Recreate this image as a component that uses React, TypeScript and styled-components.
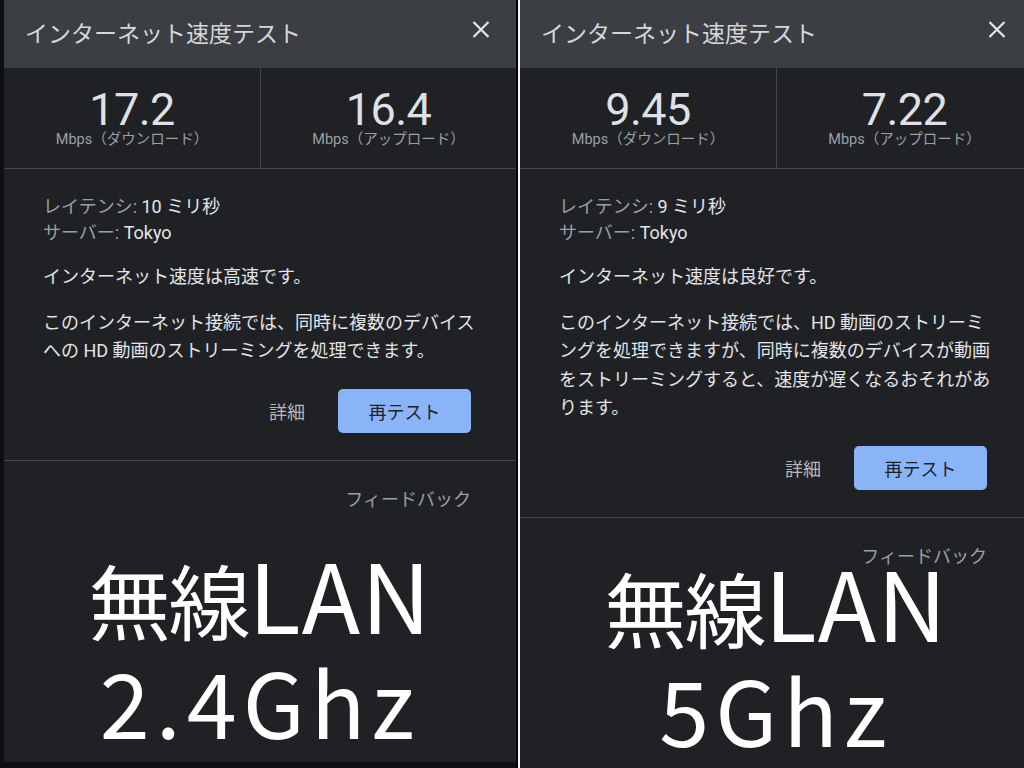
import styled, { createGlobalStyle } from 'styled-components';

type Result = {
  down: string;
  up: string;
  latency: string;
  verdict: string;
  detail: string;
  band: string;
};

const results: Result[] = [
  {
    down: '17.2',
    up: '16.4',
    latency: '10 ミリ秒',
    verdict: 'インターネット速度は高速です。',
    detail: 'このインターネット接続では、同時に複数のデバイスへの HD 動画のストリーミングを処理できます。',
    band: '2.4Ghz',
  },
  {
    down: '9.45',
    up: '7.22',
    latency: '9 ミリ秒',
    verdict: 'インターネット速度は良好です。',
    detail:
      'このインターネット接続では、HD 動画のストリーミングを処理できますが、同時に複数のデバイスが動画をストリーミングすると、速度が遅くなるおそれがあります。',
    band: '5Ghz',
  },
];

const CloseIcon = () => (
  <svg width="18" height="17" viewBox="0 0 18 17">
    <path d="M1.5 1L16.5 16M16.5 1L1.5 16" stroke="#e3e5e8" strokeWidth="2.2" />
  </svg>
);

const SpeedDialog = ({ data, captionGap }: { data: Result; captionGap: number }) => (
  <Dialog>
    <Header>
      <Title>インターネット速度テスト</Title>
      <CloseBtn type="button">
        <CloseIcon />
      </CloseBtn>
    </Header>
    <Stats>
      <StatCell>
        <StatValue>{data.down}</StatValue>
        <StatLabel>Mbps（ダウンロード）</StatLabel>
      </StatCell>
      <StatCell>
        <StatValue>{data.up}</StatValue>
        <StatLabel>Mbps（アップロード）</StatLabel>
      </StatCell>
    </Stats>
    <Body>
      <InfoLine>
        <Key>レイテンシ:</Key> {data.latency}
      </InfoLine>
      <InfoLine>
        <Key>サーバー:</Key> Tokyo
      </InfoLine>
      <Verdict>{data.verdict}</Verdict>
      <Detail>{data.detail}</Detail>
      <Actions>
        <TextBtn type="button">詳細</TextBtn>
        <RetestBtn type="button">再テスト</RetestBtn>
      </Actions>
    </Body>
    <Footer>
      <FeedbackRow>
        <Feedback>フィードバック</Feedback>
      </FeedbackRow>
      <Caption $gap={captionGap}>
        <CaptionLine>
          <Kanji>無線</Kanji>LAN
        </CaptionLine>
        <CaptionLine $wide>{data.band}</CaptionLine>
      </Caption>
    </Footer>
  </Dialog>
);

const App = () => (
  <>
    <GlobalStyle />
    <Page>
      <Shot $inset>
        <SpeedDialog data={results[0]} captionGap={29} />
      </Shot>
      <Seam />
      <Shot>
        <SpeedDialog data={results[1]} captionGap={35} />
      </Shot>
    </Page>
  </>
);

export default App;

const GlobalStyle = createGlobalStyle`
  body {
    margin: 0;
    background: #000;
    font-family: Roboto, "Noto Sans CJK JP", sans-serif;
  }
`;

const Page = styled.div`
  display: flex;
  width: 1024px;
  height: 768px;
  overflow: hidden;
`;

const Shot = styled.div<{ $inset?: boolean }>`
  display: flex;
  flex: ${({ $inset }) => ($inset ? '0 0 auto' : '1 1 0')};
  min-width: 0;
  padding: ${({ $inset }) => ($inset ? '0 0 6px 4px' : '0')};
  background: #0e0f11;
  overflow: hidden;
`;

const Seam = styled.div`
  flex: 0 0 2px;
  background: #000;
  border-right: 2px solid #f4f4f4;
`;

const Dialog = styled.div`
  display: flex;
  flex-direction: column;
  flex: 0 0 512px;
  width: 512px;
  background: #202124;
  color: #e8eaed;

  & > * {
    flex-shrink: 0;
  }
`;

const Header = styled.div`
  display: flex;
  justify-content: space-between;
  align-items: flex-start;
  height: 68px;
  padding: 0 26px 0 21px;
  background: #3b3e42;
`;

const Title = styled.h1`
  margin: 22px 0 0;
  font-size: 23px;
  font-weight: 400;
  line-height: 26px;
  color: #d5d7da;
`;

const CloseBtn = styled.button`
  display: flex;
  margin-top: 21px;
  padding: 0;
  border: none;
  background: transparent;
  cursor: pointer;
`;

const Stats = styled.div`
  display: grid;
  grid-template-columns: 256px 1fr;
  height: 100px;
  border-bottom: 1px solid #44474b;
`;

const StatCell = styled.div`
  display: flex;
  flex-direction: column;
  align-items: center;
  padding-top: 19px;

  & + & {
    border-left: 1px solid #44474b;
  }
`;

const StatValue = styled.div`
  font-size: 45px;
  line-height: 46px;
  letter-spacing: -0.5px;
  color: #dfe1e4;
`;

const StatLabel = styled.div`
  margin-top: -2px;
  font-size: 14.5px;
  line-height: 18px;
  color: #9aa0a6;
`;

const Body = styled.div`
  padding: 25px 45px 27px 39px;
  border-bottom: 1px solid #44474b;
  font-size: 18px;
`;

const InfoLine = styled.div`
  line-height: 26px;
  color: #e3e5e8;
`;

const Key = styled.span`
  color: #9aa0a6;
`;

const Verdict = styled.p`
  margin: 17px 0 0;
  line-height: 28px;
  color: #e3e5e8;
`;

const Detail = styled.p`
  width: 436px;
  margin: 18px 0 0;
  line-height: 28.4px;
  color: #e3e5e8;
`;

const Actions = styled.div`
  display: flex;
  justify-content: flex-end;
  align-items: center;
  gap: 33px;
  margin-top: 23px;
`;

const TextBtn = styled.button`
  padding: 0;
  border: none;
  background: transparent;
  font-family: inherit;
  font-size: 18px;
  color: #b4b8bd;
  cursor: pointer;
`;

const RetestBtn = styled.button`
  width: 133px;
  height: 44px;
  border: none;
  border-radius: 5px;
  background: #8ab4f8;
  font-family: inherit;
  font-size: 18px;
  color: #202124;
  cursor: pointer;
`;

const Footer = styled.div`
  display: flex;
  flex-direction: column;
  flex: 1 1 auto !important;
`;

const FeedbackRow = styled.div`
  display: flex;
  justify-content: flex-end;
  padding: 28px 45px 0 0;
`;

const Feedback = styled.span`
  font-size: 18px;
  line-height: 22px;
  color: #9aa0a6;
`;

const Caption = styled.div<{ $gap: number }>`
  display: flex;
  flex-direction: column;
  align-items: center;
  gap: 35px;
  margin-top: auto;
  padding-bottom: ${({ $gap }) => $gap}px;
  font-family: "Noto Sans CJK JP", sans-serif;
  color: #fff;
`;

const CaptionLine = styled.div<{ $wide?: boolean }>`
  font-size: ${({ $wide }) => ($wide ? 90 : 96)}px;
  line-height: 66px;
  letter-spacing: ${({ $wide }) => ($wide ? 6 : 1)}px;
  white-space: nowrap;
`;

const Kanji = styled.span`
  font-size: 82px;
  letter-spacing: -2px;
`;
